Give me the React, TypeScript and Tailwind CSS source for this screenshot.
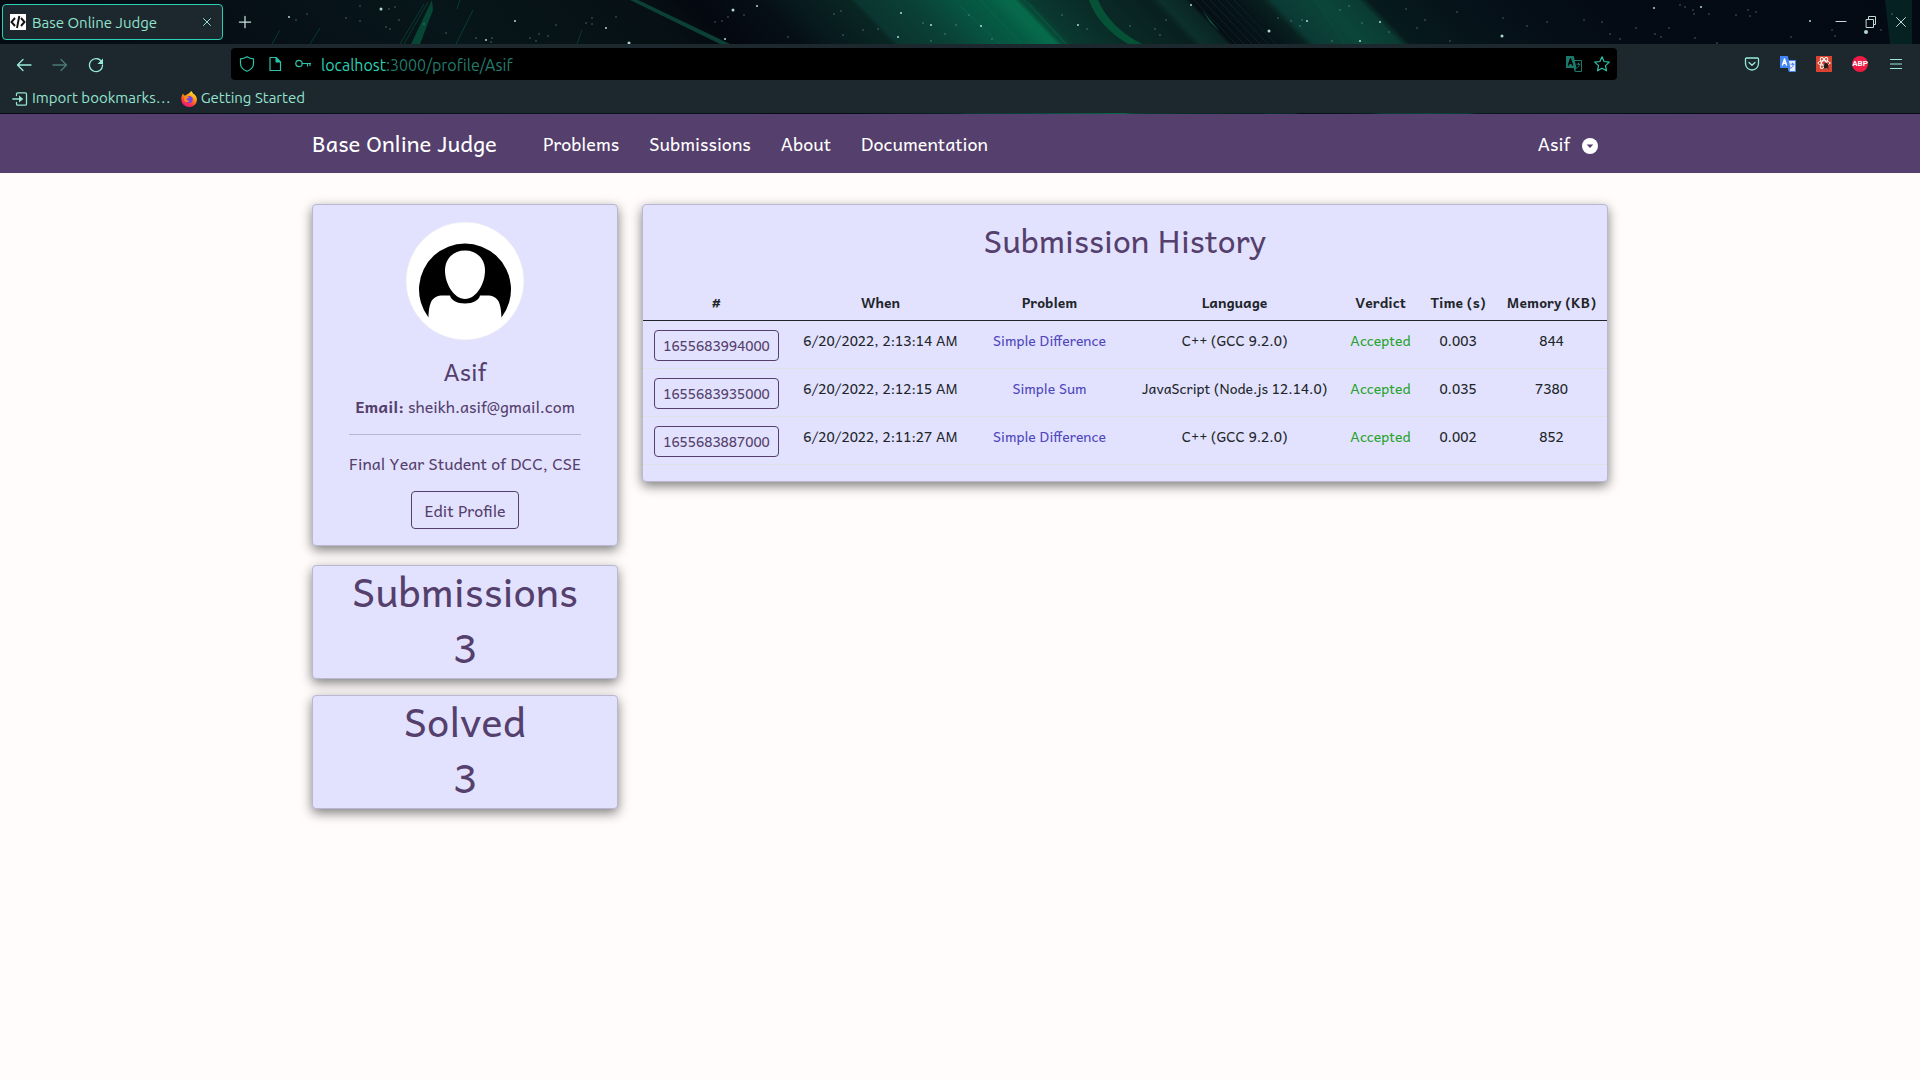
import type { ReactNode } from "react";

const STARS: [number, number, number][] = [
  [289, 17, 2], [296, 20, 1], [307, 14, 1], [346, 18, 1], [360, 6, 1], [360, 21, 1], [381, 9, 3], [389, 9, 1], [395, 7, 1],
  [386, 27, 1], [390, 29, 1], [399, 20, 1], [424, 24, 1], [446, 33, 1], [476, 38, 1], [486, 40, 2], [492, 38, 1], [491, 42, 1],
  [515, 21, 2], [530, 38, 1], [536, 41, 1], [539, 34, 1], [548, 36, 1], [556, 25, 1], [586, 23, 1], [592, 18, 1], [592, 24, 1],
  [606, 28, 2], [616, 17, 1], [629, 43, 3], [715, 22, 1], [722, 21, 1], [728, 17, 1], [733, 10, 3], [744, 15, 1], [757, 6, 2],
  [725, 39, 2], [788, 37, 1], [834, 14, 1], [841, 11, 1], [843, 35, 1], [863, 30, 1], [878, 29, 1], [898, 37, 2], [901, 13, 2],
  [923, 23, 1], [931, 25, 2], [945, 34, 1], [931, 41, 1], [956, 25, 1], [969, 15, 1], [981, 26, 2], [992, 39, 1],
  [1062, 15, 1], [1078, 25, 2], [1087, 29, 1], [1130, 26, 1], [1166, 20, 1], [1160, 35, 1], [1155, 29, 1], [1191, 5, 2],
  [1269, 31, 3], [1278, 18, 1], [1291, 21, 1], [1302, 20, 1], [1307, 21, 2], [1300, 26, 1], [1332, 41, 1], [1349, 6, 1],
  [1340, 10, 1], [1360, 41, 2], [1362, 23, 1], [1380, 22, 2], [1389, 32, 1], [1406, 9, 1], [1417, 28, 1], [1425, 20, 1],
  [1450, 41, 1], [1457, 12, 1], [1502, 36, 3], [1503, 18, 1], [1527, 26, 1], [1547, 22, 1], [1584, 20, 1], [1602, 22, 1],
  [1610, 34, 1], [1620, 39, 1], [1654, 8, 2], [1680, 5, 1], [1685, 7, 1], [1693, 10, 1], [1694, 14, 1], [1701, 7, 2],
  [1709, 14, 1], [1736, 15, 1], [1748, 10, 1], [1750, 16, 1], [1756, 12, 1], [1636, 28, 1], [1655, 34, 1], [1661, 37, 1],
  [1669, 28, 1], [1695, 38, 1], [1717, 43, 1], [1791, 37, 1], [1810, 21, 2], [1832, 30, 1], [1835, 36, 1], [1866, 32, 4],
  [1881, 30, 1], [1892, 14, 1],
];

const SKY: [number, string][] = [
  [0, "#050b13"], [200, "#060f16"], [420, "#07161a"], [640, "#061015"], [690, "#040810"], [760, "#060f16"], [790, "#07191d"],
  [850, "#092623"], [856, "#0b3530"], [910, "#0a4136"], [950, "#075240"], [985, "#055c43"], [1004, "#07684a"], [1014, "#066b4a"],
  [1020, "#074a38"], [1032, "#0a382f"], [1088, "#0a2a26"], [1150, "#08201f"], [1160, "#0c302d"], [1185, "#0a2524"],
  [1190, "#050e14"], [1235, "#06141a"], [1262, "#08201f"], [1272, "#0b3a35"], [1320, "#0b4539"], [1358, "#0a3c33"],
  [1368, "#071a1e"], [1440, "#06141a"], [1520, "#050e17"], [1600, "#040b14"], [1920, "#040a14"],
];

function Aurora() {
  return (
    <svg className="absolute inset-0 h-full w-full" viewBox="0 0 1920 114" preserveAspectRatio="xMinYMin slice" aria-hidden="true">
      <defs>
        <linearGradient id="sky" gradientUnits="userSpaceOnUse" x1="0" y1="0" x2="1920" y2="0" gradientTransform="skewX(44)">
          {SKY.map(([x, color]) => (
            <stop key={x} offset={x / 1920} stopColor={color} />
          ))}
        </linearGradient>
      </defs>
      <rect width="1920" height="114" fill="url(#sky)" />
      <path d="M980 0L1022 44M1024 0L1066 44M1028 2L1068 46M960 6L1000 44" stroke="#0a8a5c" opacity=".25" fill="none" />
      <path d="M1089 0Q1098 26 1128 44H1142Q1110 28 1098 0z" fill="#055236" />
      <path d="M1194 0L1236 44M1202 0L1244 44M1210 0L1252 44M1218 0L1260 44M1226 0L1268 44M1234 0L1276 44" stroke="#0e2c2b" opacity=".7" fill="none" />
      <path d="M1202 10L1220 32L1210 22z" fill="#0e5b4e" />
      <path d="M1315 0L1345 44" stroke="#0a5a38" opacity=".5" fill="none" />
      <path d="M432 0L411 44H420L433 10z" fill="#074535" />
      <path d="M424 4L400 44M428 2L404 44M460 0L457 9M473 10L456 44M280 30L272 44M320 28L310 44M582 30L577 44" stroke="#0a4a3a" opacity=".7" fill="none" />
      <path d="M630 0H638L730 44H720z" fill="#0c4034" />
      <path d="M1885 0H1912V44H1890z" fill="#07302c" opacity=".6" />
      {STARS.map(([x, y, s]) => (
        <circle key={`${x}-${y}`} cx={x} cy={y} r={s > 1 ? s / 2 : 0.7} fill="#b9e3dc" opacity={s > 1 ? 0.95 : 0.5} />
      ))}
    </svg>
  );
}

function Icon({ size = 16, className = "", children }: { size?: number; className?: string; children: ReactNode }) {
  return (
    <svg width={size} height={size} viewBox="0 0 16 16" fill="none" stroke="currentColor" strokeLinecap="round" strokeLinejoin="round" className={`shrink-0 ${className}`} aria-hidden="true">
      {children}
    </svg>
  );
}

function Translate({ front, back, letter }: { front: string; back: string; letter: string }) {
  return (
    <>
      <path d="M7.5 4.5h8v11h-6z" fill={back} stroke={front} strokeWidth="1" />
      <path d="M11 8.2h3M12.5 7.2v1M11 12c1.6-.7 2.2-2 2.4-3.7" stroke={front} />
      <path d="M0 0h7.800l2.700 12H0z" fill={front} stroke="none" />
      <path d="M7.8 12h2.700l-1.700 3z" fill={front} stroke="none" />
      <path d="M2.500 9l2-6L6.500 9M3.200 7.200h2.700" stroke={letter} strokeWidth="1.4" />
    </>
  );
}

function TabStrip() {
  return (
    <div className="relative flex h-11 items-center pl-0.5">
      <div className="flex h-9 w-[221px] items-center rounded-sm border border-[#2bd0b5] bg-[#1c282e] pr-[7px] pl-[7px]">
        <svg width="16" height="16" viewBox="0 0 16 16" className="bg-white" aria-hidden="true">
          <path d="M5 4L1.5 8 5 12M11 4l3.5 4L11 12M9.3 2L7 14" fill="none" stroke="#111" strokeWidth="1.9" />
        </svg>
        <span className="ml-1.5 flex-1 pt-0.5 text-[15px] whitespace-nowrap">Base Online Judge</span>
        <button aria-label="Close tab"><Icon><path d="M4.5 4.5l7 7M11.5 4.5l-7 7" /></Icon></button>
      </div>
      <button aria-label="New tab" className="ml-3 text-[#c5e3dc]"><Icon size={20}><path d="M8 3.500v9M3.500 8h9" /></Icon></button>
      <div className="ml-auto flex gap-3.5 pr-[11px] text-[#c3dad8]">
        <button aria-label="Minimize"><Icon><path d="M3 7.500h10" /></Icon></button>
        <button aria-label="Restore"><Icon><path d="M3.5 5.5h7v8h-7zM5.5 5.5v-3h7v8h-2" strokeLinejoin="miter" /></Icon></button>
        <button aria-label="Close window"><Icon><path d="M3.5 3.5l9 9M12.5 3.5l-9 9" /></Icon></button>
      </div>
    </div>
  );
}

function Toolbar() {
  return (
    <div className="relative bg-[#1c282e] pt-1">
      <div className="flex items-center">
        <div className="flex w-[231px] shrink-0 gap-5 pt-px pl-4 text-[#98ebd9]">
          <button aria-label="Back"><Icon><path d="M1.5 8h13.5M7 2.5L1.5 8 7 13.5" strokeWidth="1.3" /></Icon></button>
          <button aria-label="Forward" className="text-[#4a7a77]"><Icon><path d="M1 8h13.5M9 2.5L14.5 8 9 13.5" strokeWidth="1.3" /></Icon></button>
          <button aria-label="Reload">
            <Icon><path d="M13.7 5A6.5 6.5 0 1 0 14.5 8" strokeWidth="1.3" /><path d="M15 1.5v5.5H9.5z" fill="currentColor" stroke="none" /></Icon>
          </button>
        </div>
        <div className="flex h-8 min-w-0 flex-1 items-center rounded bg-black pr-[7px] pl-2 text-[#2cc3a9]">
          <Icon><path d="M8 .7C10 2 12 2.700 14.500 2.900V7.500c0 3.800-2.500 6.300-6.500 7.800C4 13.800 1.500 11.300 1.500 7.500V2.900C4 2.700 6 2 8 .7z" strokeWidth="1.2" /></Icon>
          <Icon className="ml-3"><path d="M3 1.5h6l4.500 4.500v8.500H3z" strokeWidth="1.2" /><path d="M8.5 1l5.500 5.500H8.500z" fill="currentColor" stroke="none" /></Icon>
          <Icon className="ml-3"><circle cx="4" cy="7.5" r="3.2" strokeWidth="1.2" /><path d="M7.2 7.500h8.300M12.5 7.500v2.500M15 7.500v2" strokeWidth="1.2" /></Icon>
          <div role="textbox" aria-label="Address" contentEditable suppressContentEditableWarning className="ml-2.5 flex-1 pt-px text-base whitespace-nowrap text-[#237b6d] outline-none">
            <span className="text-[#2bcfb2]">localhost</span>:3000/profile/Asif
          </div>
          <button aria-label="Translate page"><Icon><Translate front="#1a7969" back="#000" letter="#000" /></Icon></button>
          <button aria-label="Bookmark this page" className="ml-3">
            <Icon><path d="M8 .8l2.100 4.700 5.200.6-3.800 3.500 1 5.200L8 12.200l-4.500 2.600 1-5.200L.7 6.100l5.200-.6z" strokeWidth="1.2" /></Icon>
          </button>
        </div>
        <div className="ml-[127px] flex gap-5 pr-4 text-[#98ebd9]">
          <button aria-label="Save to Pocket"><Icon><path d="M2.5 2h11a1 1 0 0 1 1 1v4.5a6.5 6.5 0 0 1-13 0V3a1 1 0 0 1 1-1zM5 6.500l3 2.800 3-2.800" strokeWidth="1.3" /></Icon></button>
          <button aria-label="Translate"><Icon><Translate front="#4285f4" back="#e8eaed" letter="#fff" /></Icon></button>
          <button aria-label="React developer tools" className="text-white">
            <Icon className="bg-[#d9432f]">
              <ellipse cx="8" cy="7" rx="6" ry="2.3" />
              <ellipse cx="8" cy="7" rx="6" ry="2.3" transform="rotate(60 8 7)" />
              <ellipse cx="8" cy="7" rx="6" ry="2.3" transform="rotate(120 8 7)" />
              <path d="M8 9l2-2.500 2 1.500 .5 3-2.500 2L8 12z" fill="#2a1a1a" stroke="none" />
              <path d="M8.500 7l3.500 6M12.5 7.500l-4.500 5M7 10l5.500 2" stroke="#2a1a1a" strokeWidth=".7" />
            </Icon>
          </button>
          <button aria-label="Adblock Plus" className="flex size-4 items-center justify-center rounded-full bg-[#ee1c45] font-['Roboto',sans-serif] text-[8px] leading-none font-bold text-white">ABP</button>
          <button aria-label="Menu"><Icon><path d="M2.5 3.5h11M2.5 8h11M2.5 12.5h11" strokeWidth="1.2" /></Icon></button>
        </div>
      </div>
      <div className="flex h-[33px] items-center pt-1 pl-3 text-[15px]">
        <a href="#import" className="flex items-center gap-1">
          <Icon><path d="M4.5 4.5V3a1.2 1.2 0 0 1 1.2-1.2h7.6A1.2 1.2 0 0 1 14.5 3v10a1.2 1.2 0 0 1-1.2 1.2H5.7A1.2 1.2 0 0 1 4.5 13v-1.5M.8 8h8" strokeWidth="1.3" /><path d="M7 4.5L11.3 8 7 11.5z" fill="currentColor" stroke="none" /></Icon>
          Import bookmarks…
        </a>
        <a href="#start" className="ml-2.5 flex items-center gap-1">
          <svg width="16" height="16" viewBox="0 0 16 16" aria-hidden="true">
            <defs>
              <linearGradient id="fire" x1=".8" y1="0" x2=".3" y2="1">
                <stop offset="0" stopColor="#fff44f" />
                <stop offset=".4" stopColor="#ff980e" />
                <stop offset=".75" stopColor="#ff3647" />
                <stop offset="1" stopColor="#e31587" />
              </linearGradient>
            </defs>
            <path d="M10 0c1.5 1 1.8 2 2.2 2.8.9.2 3.8 2.5 3.8 6A7.5 7.5 0 0 1 8.3 16 7.8 7.8 0 0 1 .3 8.7C.1 6 1 4 2.2 2.6L3 4.5l2-.3C6.5 2.8 9 2.5 10 0z" fill="url(#fire)" />
            <circle cx="8.2" cy="8.5" r="3.6" fill="#7542e5" />
            <path d="M3 5.5c2-1 4-.5 5.500 1-1.500 0-2 1-3 1.500.3 1.500 1.500 2 3 1.500-1 2.500-5 2-5.500-1z" fill="#ff8a16" />
          </svg>
          Getting Started
        </a>
      </div>
    </div>
  );
}

function SiteNav() {
  return (
    <nav className="bg-[#553f6c] text-white">
      <div className="mx-auto flex h-[59px] max-w-[1320px] items-center px-3 text-lg leading-[27px]">
        <a href="#home" className="text-[22px] leading-[33px]">Base Online Judge</a>
        <div className="ml-[46px] flex gap-[30px]">
          <a href="#problems">Problems</a>
          <a href="#submissions">Submissions</a>
          <a href="#about">About</a>
          <a href="#documentation">Documentation</a>
        </div>
        <button className="mr-2.5 ml-auto flex items-center gap-3">
          Asif
          <svg width="16" height="16" viewBox="0 0 16 16" className="mt-1" aria-hidden="true">
            <circle cx="8" cy="8" r="8" fill="#fff" />
            <path d="M4.7 6.5h6.6L8 10z" fill="#553f6c" />
          </svg>
        </button>
      </div>
    </nav>
  );
}

function Card({ className = "", children }: { className?: string; children: ReactNode }) {
  return (
    <section className={`rounded-sm border border-[#b9b8d0] bg-[#e2e2fe] shadow-[0_4px_12px_rgba(0,0,0,0.5)] ${className}`}>{children}</section>
  );
}

function Avatar() {
  return (
    <svg width="120" height="120" viewBox="0 0 120 120" role="img" aria-label="Profile picture">
      <circle cx="60" cy="60" r="59" fill="#fff" stroke="#e6e6ee" strokeWidth=".6" />
      <path d="M23.5 96.5A46 46 0 1 1 96.5 96.5C96 82 93.5 74.5 82 74.5H75C74 79 68 82.5 60 82.5S46 79 45 74.5H38C26.5 74.5 24 82 23.5 96.5z" fill="#000" />
      <path d="M60 29.5c12 0 20 8.5 20 20C80 63 71 78 60 78S40 63 40 49.5c0-11.5 8-20 20-20z" fill="#fff" />
    </svg>
  );
}

function Stat({ label, value }: { label: string; value: number }) {
  return (
    <Card className="pt-px pb-[7px] text-center text-[40px] leading-[48px] text-[#553f6c]">
      <h2 className="mb-2">{label}</h2>
      <p>{value}</p>
    </Card>
  );
}

const ROWS = [
  { id: "1655683994000", when: "6/20/2022, 2:13:14 AM", problem: "Simple Difference", language: "C++ (GCC 9.2.0)", time: "0.003", memory: "844" },
  { id: "1655683935000", when: "6/20/2022, 2:12:15 AM", problem: "Simple Sum", language: "JavaScript (Node.js 12.14.0)", time: "0.035", memory: "7380" },
  { id: "1655683887000", when: "6/20/2022, 2:11:27 AM", problem: "Simple Difference", language: "C++ (GCC 9.2.0)", time: "0.002", memory: "852" },
];

const COLUMNS = [
  { title: "#", width: "w-[147px]" },
  { title: "When", width: "w-[181px]" },
  { title: "Problem", width: "w-[157px]" },
  { title: "Language", width: "w-[213px]" },
  { title: "Verdict", width: "w-[79px]" },
  { title: "Time (s)", width: "w-[76px]" },
  { title: "Memory (KB)", width: "w-[111px]" },
];

function History() {
  return (
    <Card className="py-4">
      <h2 className="mb-6 text-center text-[32px] leading-[39px] text-[#553f6c]">Submission History</h2>
      <table className="w-full table-fixed border-separate border-spacing-0 text-center text-sm leading-[21px] text-[#212529]">
        <thead>
          <tr>
            {COLUMNS.map((c) => (
              <th key={c.title} scope="col" className={`border-b border-[#212529] pt-2 pb-[7px] font-bold whitespace-nowrap ${c.width}`}>{c.title}</th>
            ))}
          </tr>
        </thead>
        <tbody className="[&_td]:border-b [&_td]:border-[#dee2e6] [&_td]:pt-[9px] [&_td]:pb-[7px] [&_td]:align-top [&_td]:whitespace-nowrap">
          {ROWS.map((r) => (
            <tr key={r.id}>
              <td><button className="mx-auto block rounded border border-[#553f6c] px-2 py-1 text-[#553f6c]">{r.id}</button></td>
              <td>{r.when}</td>
              <td><a href="#problem" className="text-[#4f46bd]">{r.problem}</a></td>
              <td>{r.language}</td>
              <td className="text-[#26a32b]">Accepted</td>
              <td>{r.time}</td>
              <td>{r.memory}</td>
            </tr>
          ))}
        </tbody>
      </table>
    </Card>
  );
}

export default function App() {
  return (
    <div className="min-h-screen bg-[#fffcfb] font-['Andika','Noto_Sans',sans-serif]">
      <header className="relative bg-[#050b13] pb-px font-['Ubuntu','Noto_Sans',sans-serif] text-[#94e3cf]">
        <Aurora />
        <TabStrip />
        <Toolbar />
      </header>
      <SiteNav />
      <main className="mx-auto grid max-w-[1320px] grid-cols-4 items-start gap-6 px-3 pt-[31px] pb-8">
        <div>
          <Card className="mb-[19px] flex flex-col items-center p-4 text-base leading-6 text-[#553f6c]">
            <Avatar />
            <h1 className="mt-4 mb-2 text-2xl leading-[29px]">Asif</h1>
            <div className="text-center">
              <p><strong>Email:</strong> sheikh.asif@gmail.com</p>
              <hr className="my-4 border-[#bdb3d6]" />
              <p>Final Year Student of DCC, CSE</p>
            </div>
            <button className="mt-4 rounded border border-[#553f6c] px-3 py-1.5">Edit Profile</button>
          </Card>
          <div className="grid gap-4">
            <Stat label="Submissions" value={3} />
            <Stat label="Solved" value={3} />
          </div>
        </div>
        <div className="col-span-3">
          <History />
        </div>
      </main>
    </div>
  );
}
